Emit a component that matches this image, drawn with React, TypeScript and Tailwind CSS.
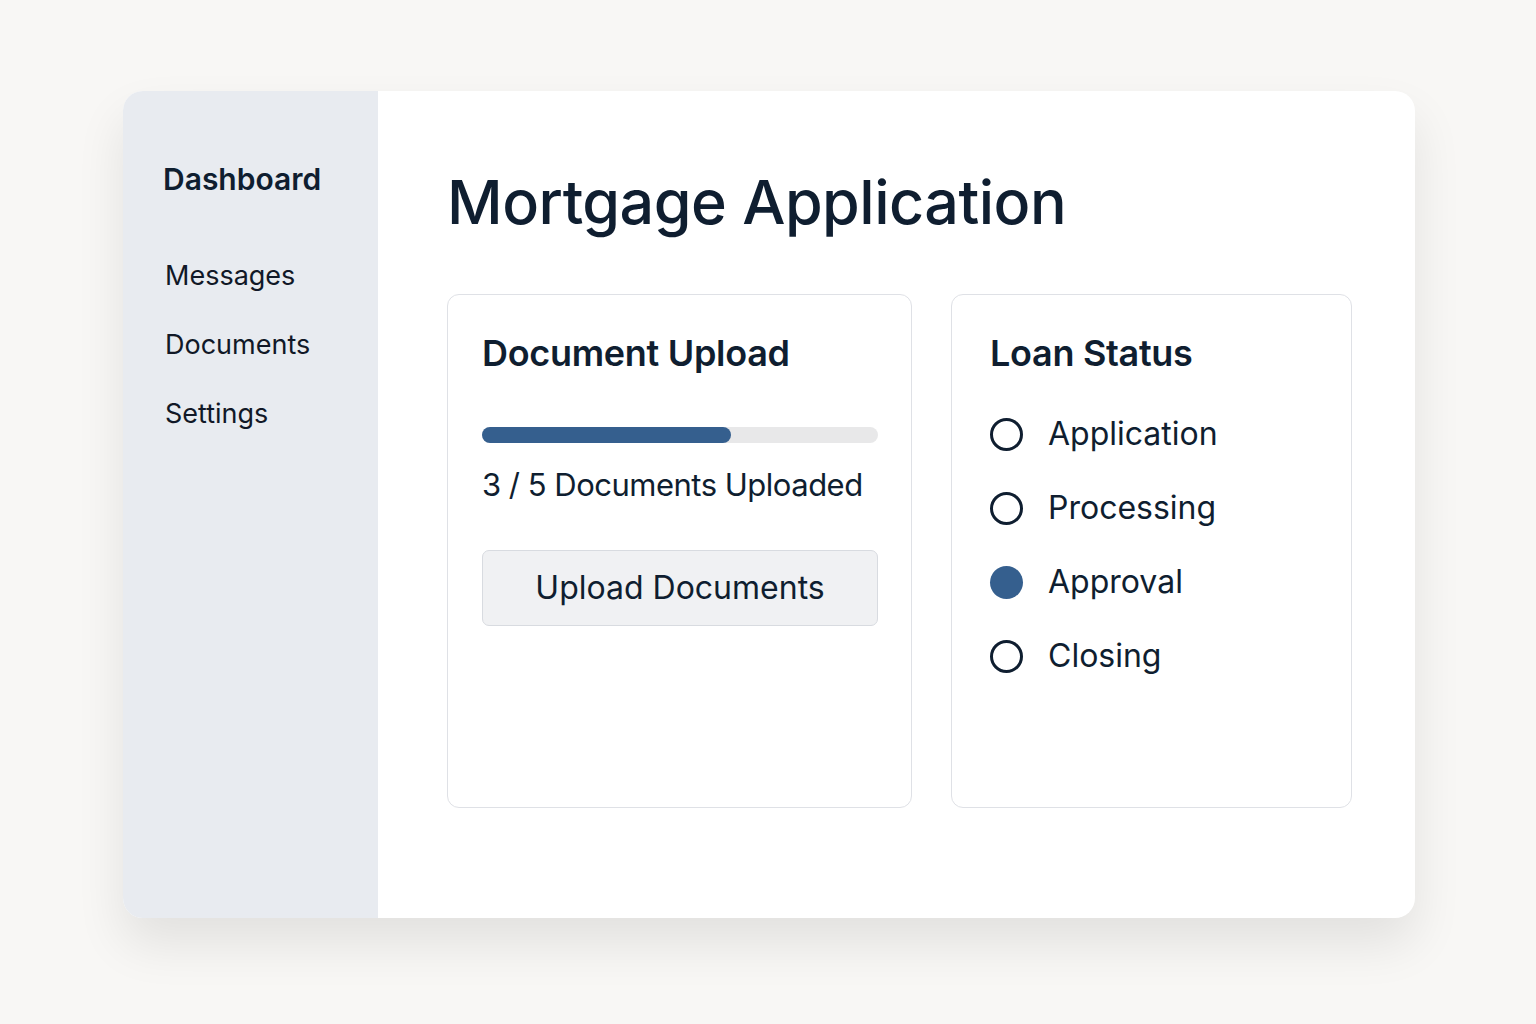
const steps = [
    { label: 'Application', active: false },
    { label: 'Processing', active: false },
    { label: 'Approval', active: true },
    { label: 'Closing', active: false },
];

export default function App() {
    return (
        <div
            className="min-h-screen w-full bg-[#f8f7f5] pt-[91px] pl-[123px] text-[#0f1e30]"
            style={{ fontFamily: 'Inter, "Noto Sans", sans-serif' }}
        >
            <div className="flex w-[1292px] h-[827px] rounded-[20px] overflow-hidden bg-white shadow-[0_26px_50px_rgba(0,0,0,0.09)]">
                {/* Sidebar */}
                <aside className="w-[255px] shrink-0 bg-[#e8ebf0] pl-[40px] pt-[68px]">
                    <div className="text-[30px] font-semibold leading-[40px]">Dashboard</div>
                    <nav className="mt-[57px] flex flex-col gap-[29px] pl-[2px] text-[27px] leading-[40px] text-[#111827]">
                        <span>Messages</span>
                        <span>Documents</span>
                        <span>Settings</span>
                    </nav>
                </aside>

                {/* Main */}
                <main className="flex-1 pl-[69px] pt-[71px]">
                    <h1 className="text-[61px] font-medium leading-[80px] mb-[52px] tracking-[-0.5px]">
                        Mortgage Application
                    </h1>

                    <div className="flex gap-[39px]">
                        <section className="w-[465px] h-[514px] rounded-[12px] border border-[#dfe1e6] px-[34px] pt-[34px]">
                            <h2 className="text-[36px] font-semibold leading-[48px] tracking-[-0.3px]">Document Upload</h2>
                            <div className="mt-[50px] h-[16px] w-[396px] rounded-full bg-[#e8e8e9]">
                                <div className="h-full rounded-full bg-[#355f8e]" style={{ width: '63%' }} />
                            </div>
                            <p className="mt-[20px] text-[31px] leading-[44px] tracking-[-0.5px] whitespace-nowrap">
                                3 / 5 Documents Uploaded
                            </p>
                            <button className="mt-[43px] h-[76px] w-[396px] rounded-[7px] border border-[#d8dbe0] bg-[#f0f1f3] text-[32px] text-[#0f1e30]">
                                Upload Documents
                            </button>
                        </section>

                        <section className="w-[401px] h-[514px] rounded-[12px] border border-[#dfe1e6] px-[38px] pt-[34px]">
                            <h2 className="text-[36px] font-semibold leading-[48px] tracking-[-0.3px]">Loan Status</h2>
                            <ul className="mt-[33px] flex flex-col gap-[26px]">
                                {steps.map((s) => (
                                    <li key={s.label} className="flex items-center gap-[25px] h-[48px]">
                                        <span
                                            className={
                                                s.active
                                                    ? 'h-[33px] w-[33px] rounded-full bg-[#355f8e]'
                                                    : 'h-[33px] w-[33px] rounded-full border-[3px] border-[#0f1e30]'
                                            }
                                        />
                                        <span className="text-[32px] leading-[48px]">{s.label}</span>
                                    </li>
                                ))}
                            </ul>
                        </section>
                    </div>
                </main>
            </div>
        </div>
    );
}
